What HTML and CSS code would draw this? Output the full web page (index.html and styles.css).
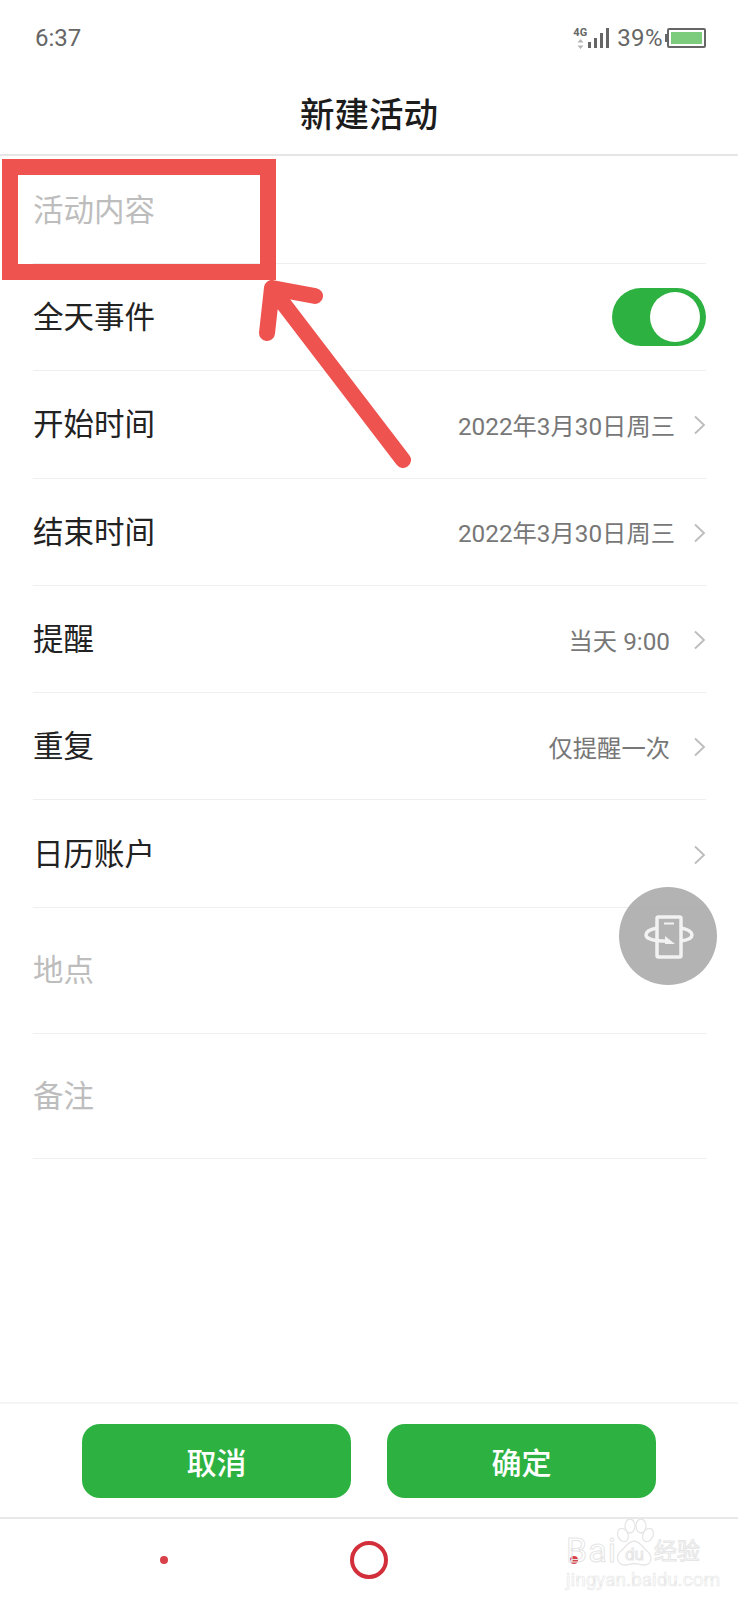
FILE: index.html
```html
<!DOCTYPE html>
<html lang="zh-CN">
<head>
    <meta charset="UTF-8">
    <meta name="viewport" content="width=device-width, initial-scale=1.0">
    <title>新建活动</title>
    <link rel="stylesheet" href="styles.css">
</head>
<body>
    <div class="page">
        <div class="status-bar">
            <span class="time">6:37</span>
            <div class="status-right">
                <div class="net">
                    <span class="net-label">4G</span>
                    <svg class="net-arrows" width="7" height="10" viewBox="0 0 7 10"><path d="M3.5 0L6.5 3.5H.5zM3.5 10L.5 6.5H6.5z" fill="#b5b5b5"/></svg>
                </div>
                <div class="signal">
                    <span class="bar bar-1"></span>
                    <span class="bar bar-2"></span>
                    <span class="bar bar-3"></span>
                    <span class="bar bar-4"></span>
                </div>
                <span class="percent">39%</span>
                <div class="battery"><div class="battery-fill"></div></div>
            </div>
        </div>
        <div class="title-bar">新建活动</div>

        <div class="form">
            <div class="row first"><span class="placeholder">活动内容</span></div>
            <div class="row">
                <span class="label">全天事件</span>
                <div class="toggle"><div class="knob"></div></div>
            </div>
            <div class="row">
                <span class="label">开始时间</span>
                <span class="value">2022年3月30日周三</span>
                <svg class="chevron" width="13" height="20" viewBox="0 0 13 20"><path d="M2 1.5L11 10L2 18.5" /></svg>
            </div>
            <div class="row">
                <span class="label">结束时间</span>
                <span class="value">2022年3月30日周三</span>
                <svg class="chevron" width="13" height="20" viewBox="0 0 13 20"><path d="M2 1.5L11 10L2 18.5" /></svg>
            </div>
            <div class="row">
                <span class="label">提醒</span>
                <span class="value short">当天 9:00</span>
                <svg class="chevron" width="13" height="20" viewBox="0 0 13 20"><path d="M2 1.5L11 10L2 18.5" /></svg>
            </div>
            <div class="row">
                <span class="label">重复</span>
                <span class="value short">仅提醒一次</span>
                <svg class="chevron" width="13" height="20" viewBox="0 0 13 20"><path d="M2 1.5L11 10L2 18.5" /></svg>
            </div>
            <div class="row">
                <span class="label">日历账户</span>
                <span class="value"></span>
                <svg class="chevron" width="13" height="20" viewBox="0 0 13 20"><path d="M2 1.5L11 10L2 18.5" /></svg>
            </div>
            <div class="row tall"><span class="placeholder">地点</span></div>
            <div class="row tall"><span class="placeholder">备注</span></div>
        </div>

        <div class="actions">
            <button class="btn">取消</button>
            <button class="btn">确定</button>
        </div>
        <div class="nav">
            <span class="nav-dot"></span>
            <span class="nav-home"></span>
            <span class="nav-dot"></span>
        </div>

        <!-- things that sit on top of the page -->
        <div class="mark-box"></div>
        <svg class="mark-arrow" width="170" height="200" viewBox="0 0 170 200">
            <path d="M153 190L23 20M22 18L17 63M22 18L65 26" />
        </svg>

        <div class="float-btn">
            <svg width="98" height="98" viewBox="0 0 98 98" fill="none" stroke="#f2f2f2" stroke-width="3.500">
                <rect x="38" y="30" width="24" height="40" rx="1.5" />
                <path d="M45 36.500H55" stroke-width="2" />
                <path d="M38 41C30 42.500 27 45 27 48C27 51.500 34 54 48 54" />
                <path d="M62 41C69 42.500 73 45 73 48C73 51 69 53 62 54" />
                <path d="M46 49L56 57H46z" fill="#f2f2f2" stroke="none" />
            </svg>
        </div>

        <div class="watermark">
            <div class="wm-top">
                <span class="wm-bai">Bai</span>
                <svg class="wm-paw" width="44" height="52" viewBox="0 0 44 52" fill="none" stroke="#e6e6e6" stroke-width="1.300">
                    <ellipse cx="11" cy="17" rx="5" ry="7" transform="rotate(-25 11 17)" />
                    <ellipse cx="18" cy="8" rx="5" ry="7" />
                    <ellipse cx="29" cy="8" rx="5" ry="7" />
                    <ellipse cx="36" cy="17" rx="5" ry="7" transform="rotate(25 36 17)" />
                    <path d="M22 23C15 24 14 29 9 33C3 38 5 47 13 47C17 47 19 45.500 22 45.500C25 45.500 28 47 32 47C40 47 41 38 35 33C30 29 29 24 22 23z" />
                </svg>
                <span class="wm-du">du</span>
                <span class="wm-cn">经验</span>
            </div>
            <div class="wm-url">jingyan.baidu.com</div>
        </div>
    </div>
</body>
</html>
```

FILE: styles.css
```css
* {
    box-sizing: border-box;
}
body {
    margin: 0;
    background: white;
    font-family: Roboto, "Noto Sans CJK SC", sans-serif;
}
.page {
    position: relative;
    display: flex;
    flex-direction: column;
    width: 738px;
    height: 1600px;
    overflow: hidden;
    background: white;
}
.status-bar {
    display: flex;
    justify-content: space-between;
    align-items: center;
    height: 76px;
    padding: 0 32px 0 35px;
    color: #666;
    font-size: 24px;
}
.status-right {
    display: flex;
    align-items: center;
}
.net {
    display: flex;
    flex-direction: column;
    align-items: center;
    width: 16px;
    margin-top: 1px;
}
.net-label {
    font-size: 11px;
    line-height: 10px;
    font-weight: 700;
    color: #666;
}
.net-arrows {
    margin-top: 1px;
}
.signal {
    display: flex;
    align-items: flex-end;
    gap: 3px;
    height: 20px;
}
.bar {
    width: 3px;
    background: #666;
}
.bar-1 {
    height: 6px;
}
.bar-2 {
    height: 10px;
}
.bar-3 {
    height: 15px;
}
.bar-4 {
    height: 20px;
}
.percent {
    margin-left: 8px;
    letter-spacing: 0.4px;
}
.battery {
    position: relative;
    width: 39px;
    height: 20px;
    margin-left: 4px;
    padding: 2px;
    border: 2px solid #666;
    border-radius: 2px;
}
.battery::before {
    content: "";
    position: absolute;
    left: -4px;
    top: 4px;
    width: 2px;
    height: 8px;
    background: #666;
}
.battery-fill {
    height: 100%;
    background: #7dcb7d;
}
.title-bar {
    height: 80px;
    padding-bottom: 7px;
    border-bottom: 2px solid #e6e6e6;
    display: flex;
    justify-content: center;
    align-items: center;
    color: #1c1c1c;
    font-size: 34.500px;
    font-weight: 500;
}
.form {
    margin: 0 32px 0 33px;
}
.row {
    display: flex;
    align-items: center;
    height: 107.300px;
    border-bottom: 1px solid #efefef;
    font-size: 30.500px;
}
.row.first {
    height: 108px;
}
.row.tall {
    height: 125.800px;
}
.label {
    color: #222;
    margin-right: auto;
    margin-bottom: 4px;
}
.placeholder {
    color: #bdbdbd;
    margin-bottom: 4px;
}
.value {
    color: #777;
    font-size: 24.300px;
    margin-right: 18px;
}
.value.short {
    margin-right: 23px;
}
.chevron {
    margin-top: 2px;
    fill: none;
    stroke: #bcbcbc;
    stroke-width: 1.800;
}
.toggle {
    display: flex;
    justify-content: flex-end;
    align-items: center;
    width: 94px;
    height: 58px;
    padding-right: 6px;
    border-radius: 29px;
    background: #2db242;
}
.knob {
    width: 50px;
    height: 50px;
    border-radius: 50%;
    background: white;
}
.actions {
    display: flex;
    justify-content: center;
    gap: 36px;
    margin-top: auto;
    padding-top: 20px;
    height: 117px;
    border-top: 2px solid #f5f5f5;
    border-bottom: 2px solid #e8e8e8;
}
.btn {
    width: 269px;
    height: 74px;
    padding: 0;
    border: none;
    border-radius: 18px;
    background: #2db242;
    color: white;
    font-family: inherit;
    font-size: 30px;
    font-weight: 500;
}
.nav {
    display: flex;
    justify-content: space-between;
    align-items: center;
    height: 81px;
    padding: 0 160px;
}
.nav-dot {
    width: 8px;
    height: 8px;
    border-radius: 50%;
    background: #d8404a;
}
.nav-home {
    width: 38px;
    height: 38px;
    border: 4px solid #d22f3b;
    border-radius: 50%;
}
.mark-box {
    position: absolute;
    left: 2px;
    top: 159px;
    width: 274px;
    height: 121px;
    border: 16px solid #ef5350;
}
.mark-arrow {
    position: absolute;
    left: 250px;
    top: 270px;
    fill: none;
    stroke: #ef5350;
    stroke-width: 16;
    stroke-linecap: round;
}
.float-btn {
    position: absolute;
    left: 619px;
    top: 887px;
    width: 98px;
    height: 98px;
    border-radius: 50%;
    background: rgba(168, 168, 168, 0.88);
}
.watermark {
    position: absolute;
    left: 566px;
    top: 1520px;
    width: 134px;
    color: transparent;
    -webkit-text-stroke: 1px #e6e6e6;
}
.wm-top {
    position: relative;
    height: 50px;
}
.wm-bai {
    position: absolute;
    left: 0;
    top: 10px;
    font-size: 34px;
    line-height: 40px;
    letter-spacing: 1px;
}
.wm-paw {
    position: absolute;
    left: 46px;
    top: -2px;
}
.wm-du {
    position: absolute;
    left: 59px;
    top: 24px;
    font-size: 17px;
    line-height: 20px;
}
.wm-cn {
    position: absolute;
    left: 88px;
    top: 18px;
    font-size: 23px;
    line-height: 28px;
}
.wm-url {
    margin-top: -1px;
    font-size: 19px;
    line-height: 22px;
    -webkit-text-stroke: 0.6px #e6e6e6;
}
```
